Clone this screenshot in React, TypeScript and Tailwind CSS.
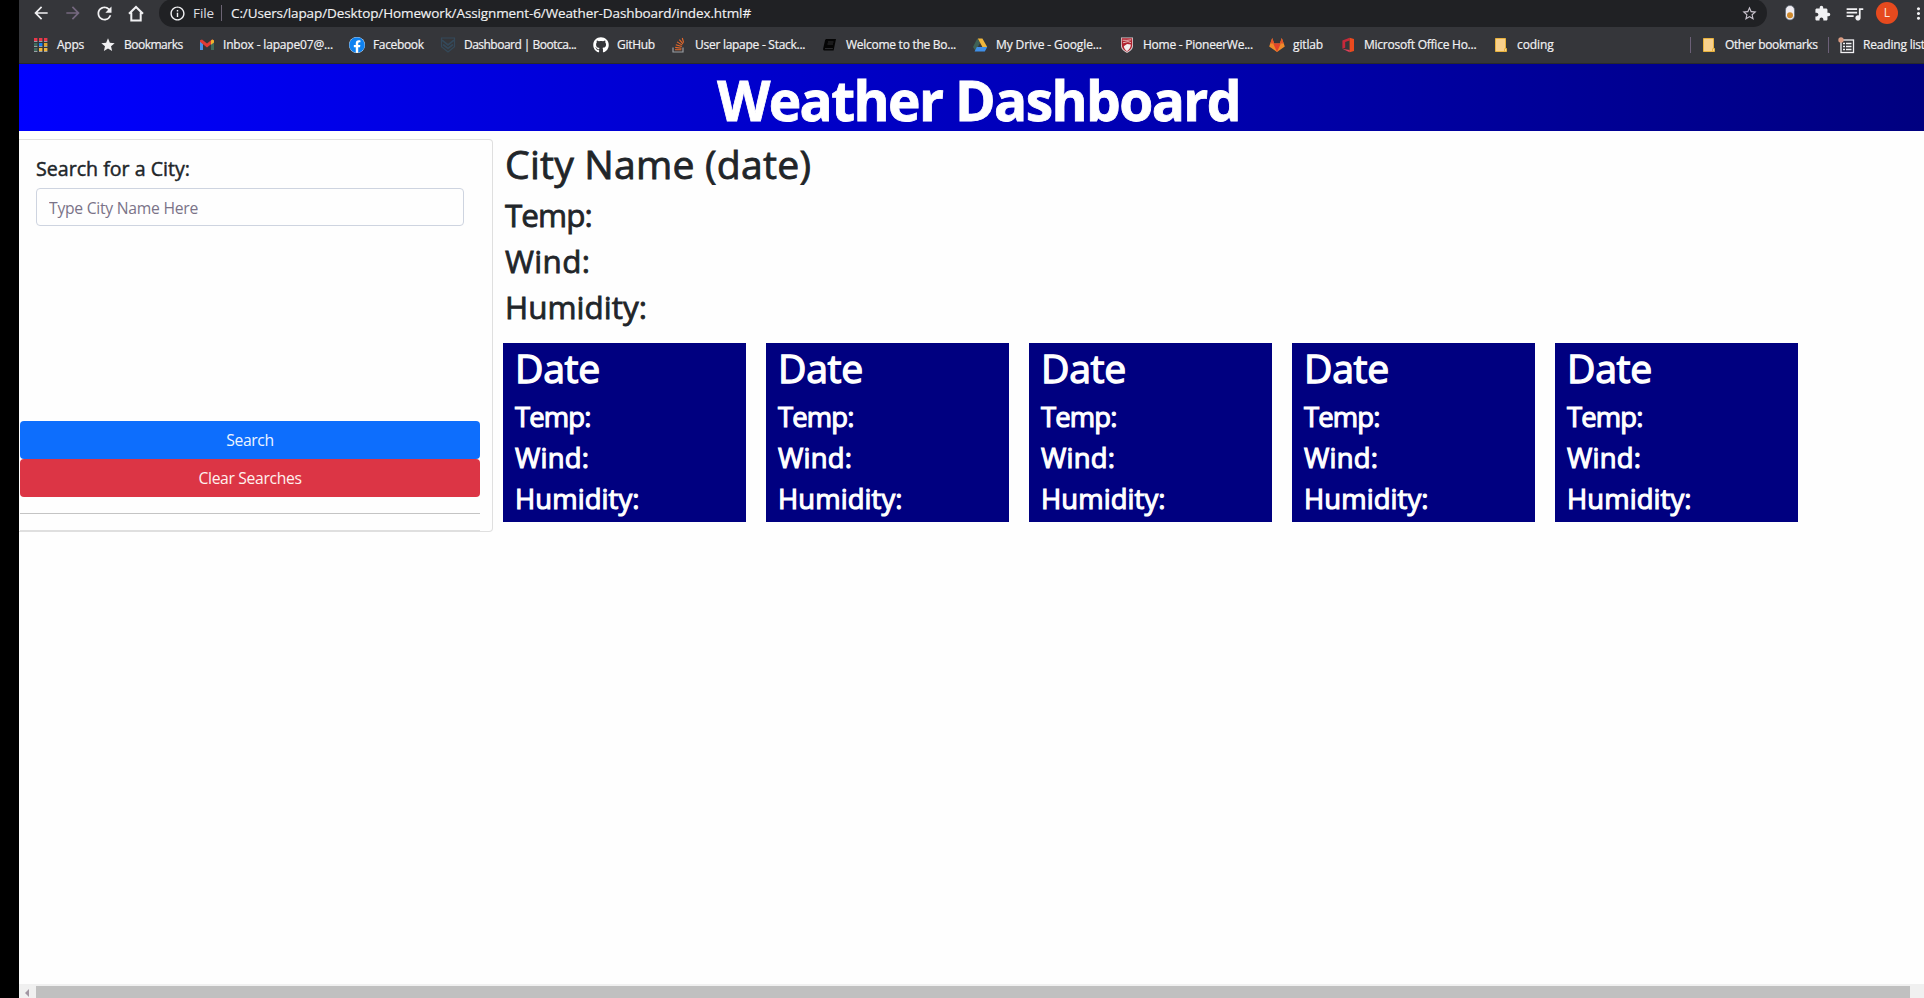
import React from "react";
import {
  MdArrowBack,
  MdArrowForward,
  MdExtension,
  MdInfoOutline,
  MdMoreVert,
  MdQueueMusic,
  MdRefresh,
  MdStar,
  MdStarBorder,
} from "react-icons/md";
import { FaFacebook, FaGithub } from "react-icons/fa";

function HomeIcon() {
  return (
    <svg width="16" height="17" viewBox="0 0 16 17" fill="none" stroke="#f1f1f3" strokeWidth="2">
      <path d="M1 8.8 8 2l7 6.800M3.300 7.500V15.500h9.400V7.500" />
    </svg>
  );
}

function AppsIcon() {
  const dots = [
    ["#e8384a", "#e8384a", "#e8384a"],
    ["#3f6b5c", "#1a7ff0", "#e0a32c"],
    ["#3f6b5c", "#f0b63a", "#f0b63a"],
  ];
  return (
    <svg width="16" height="16" viewBox="0 0 16 16">
      {dots.map((row, y) =>
        row.map((c, x) => (
          <g key={`${x}-${y}`}>
            <rect x={1 + x * 5} y={1 + y * 5} width="3.4" height="3" fill={c} />
            <rect x={1 + x * 5} y={4 + y * 5} width="3.4" height="1" fill="#9aa0a6" />
          </g>
        )),
      )}
    </svg>
  );
}

function GmailIcon() {
  return (
    <svg width="16" height="16" viewBox="0 0 16 16">
      <path d="M1 4v9h3V7z" fill="#4a90e8" />
      <path d="M15 4v9h-3V7z" fill="#3f6b5c" />
      <path d="M1 3.2 3 2.6l5 4 5-4 2 .6v1.6l-7 5.6-7-5.6z" fill="#e23b36" />
      <path d="M12 3.4 13.4 2.4 15 3.4V5.4l-3 2.4z" fill="#efb32c" />
    </svg>
  );
}

function BootcampIcon() {
  return (
    <svg width="16" height="16" viewBox="0 0 16 16" fill="none" stroke="#34495a" strokeWidth="1.7">
      <path d="M1.5 1h13v8.6L8 15 1.5 9.6z" strokeWidth="1.2" />
      <path d="M2 3.2 8 8l6-4.8M3 7.5l5 4 5-4" />
    </svg>
  );
}

function StackIcon() {
  return (
    <svg width="16" height="16" viewBox="0 0 16 16" fill="none">
      <path d="M2 10.5V15h10v-4.5" stroke="#9a9da1" strokeWidth="1.2" />
      <path
        d="M4 12.8h6.4M4.2 10.4l6.3.9M4.8 7.7l6 1.9M6 4.9l5.3 3.2M8.4 2.6l3.6 4.3M11.3 1l1.3 4.6"
        stroke="#e8692a"
        strokeWidth="1.1"
      />
    </svg>
  );
}

function BookIcon() {
  return (
    <svg width="16" height="16" viewBox="0 0 16 16">
      <path d="M5 2h9l-2.4 11.6H2.2c-1-.2-1.2-1.2-1-2L3 3.5C3.3 2.4 4 2 5 2z" fill="#050505" />
      <path d="M6 5h5.5M5.5 7h5.5M3 11.6h7.8" stroke="#3a3a3d" strokeWidth="0.8" />
    </svg>
  );
}

function DriveIcon() {
  return (
    <svg width="16" height="16" viewBox="0 0 16 16">
      <path d="M5.3 1.6 8 6 3.6 14 1 10z" fill="#3f6156" />
      <path d="M5.8 1.6h4.6L15.2 10h-4.8z" fill="#f0b63a" />
      <path d="M4.8 10h10.4l-2.4 4.4H2.6z" fill="#3f8fe8" />
    </svg>
  );
}

function PioneerIcon() {
  return (
    <svg width="16" height="16" viewBox="0 0 16 16">
      <path d="M2 .5h12v8c0 3.600-2.600 5.800-6 7.400C4.600 14.300 2 12.100 2 8.500z" fill="#d9cfd2" />
      <path d="M2.800 1.300h10.400v6.500c0 3.400-2 5.400-5.200 7-3.200-1.600-5.200-3.600-5.200-7z" fill="#b0232f" />
      <path d="M4.800 9.200 8 7l3.800.6c0 3-1.400 4.800-3.800 6.600-1.900-1.300-2.900-3-3.200-5z" fill="#f3eeee" />
      <path d="M3.600 3.200c3 .3 5.400.2 8.600-.4M4 5.800l5-1.200 3 1" stroke="#e9c9cb" strokeWidth="0.9" fill="none" />
    </svg>
  );
}

function GitlabIcon() {
  return (
    <svg width="16" height="16" viewBox="0 0 16 16">
      <path d="M8 15 .2 9.4 3.2 1l2 5.400h5.600l2-5.400 3 8.400z" fill="#f08a2a" />
      <path d="M8 15 4.200 6.400h7.600z" fill="#e2432a" />
      <path d="M3.200 1l2 5.400H1.400zM12.800 1l-2 5.400h3.800z" fill="#e2532a" />
    </svg>
  );
}

function OfficeIcon() {
  return (
    <svg width="16" height="16" viewBox="0 0 16 16">
      <path d="M9.600.8 2.400 3.600v8.200l2.800-1V5l4.400-1.400z" fill="#c8283a" />
      <path d="M9.600.8 14 2v12l-4.400 1.300z" fill="#ea4a1e" />
      <path d="M2.400 11.800 5.200 12.200l4.400.8v2.300z" fill="#e0405a" />
    </svg>
  );
}

function FolderIcon() {
  return (
    <svg width="16" height="16" viewBox="0 0 16 16">
      <path d="M2.500 1.500h10v10h1v3h-11z" fill="#f8d08c" stroke="#e9b23c" />
      <path d="M11.500 14v-2.500" stroke="#e9b23c" />
    </svg>
  );
}

function ReadingIcon() {
  return (
    <svg width="17" height="17" viewBox="0 0 17 17" fill="none">
      <rect x="3" y="3" width="12.500" height="12.500" stroke="#f1f1f3" strokeWidth="1.300" />
      <path d="M5 6.500h2M8 6.500h5.500M5 9.500h2M8 9.500h5.500M5 12.500h2M8 12.500h5.500" stroke="#f1f1f3" strokeWidth="1.400" />
      <circle cx="3" cy="3" r="2.700" fill="#d99a80" />
    </svg>
  );
}

function SwitchIcon() {
  return (
    <svg width="10" height="16" viewBox="0 0 10 16" className="shrink-0">
      <rect x="0.500" y="0.500" width="9" height="14.500" rx="4.500" fill="#f1eef3" stroke="#5a6673" strokeWidth="0.700" />
      <circle cx="5" cy="10.300" r="3" fill="#cf8a2c" />
    </svg>
  );
}

type Bookmark = { label: string; box: string; text: string; icon: React.ReactNode };

const bookmarks: Bookmark[] = [
  { label: "Apps", box: "w-[67px]", text: "tracking-[-0.25px]", icon: <AppsIcon /> },
  { label: "Bookmarks", box: "w-[99px]", text: "tracking-[-0.5px]", icon: <MdStar size={16} color="#f1f1f3" /> },
  { label: "Inbox - lapape07@...", box: "w-[150px]", text: "tracking-[-0.17px]", icon: <GmailIcon /> },
  {
    label: "Facebook",
    box: "w-[91px]",
    text: "tracking-[-0.35px]",
    icon: (
      <span className="flex size-4 items-center justify-center rounded-full bg-white">
        <FaFacebook size={16} color="#0f82f0" />
      </span>
    ),
  },
  { label: "Dashboard | Bootca...", box: "w-[153px]", text: "tracking-[-0.52px]", icon: <BootcampIcon /> },
  { label: "GitHub", box: "w-[78px]", text: "tracking-[-0.3px]", icon: <FaGithub size={16} color="#ffffff" /> },
  { label: "User lapape - Stack...", box: "w-[151px]", text: "tracking-[-0.27px]", icon: <StackIcon /> },
  { label: "Welcome to the Bo...", box: "w-[150px]", text: "tracking-[-0.27px]", icon: <BookIcon /> },
  { label: "My Drive - Google...", box: "w-[147px]", text: "tracking-[-0.12px]", icon: <DriveIcon /> },
  { label: "Home - PioneerWe...", box: "w-[150px]", text: "tracking-[-0.24px]", icon: <PioneerIcon /> },
  { label: "gitlab", box: "w-[71px]", text: "tracking-[-0.14px]", icon: <GitlabIcon /> },
  { label: "Microsoft Office Ho...", box: "w-[153px]", text: "tracking-[-0.24px]", icon: <OfficeIcon /> },
  { label: "coding", box: "w-[80px]", text: "tracking-[-0.1px]", icon: <FolderIcon /> },
];

function AddressBar() {
  return (
    <div className="flex h-[27px] shrink-0 items-start text-[#f1f1f3]">
      <div className="flex h-[26px] w-[140px] shrink-0 items-center pl-3">
        <MdArrowBack size={20} className="shrink-0" />
        <MdArrowForward size={20} className="ml-3 shrink-0 text-[#75687f]" />
        <MdRefresh size={21} className="ml-[11px] shrink-0" />
        <span className="ml-[13px] shrink-0">
          <HomeIcon />
        </span>
      </div>
      <div className="-mt-px flex h-7 w-[1608px] shrink-0 items-center rounded-full bg-[#202124] pl-[10px] text-[13.5px]">
        <MdInfoOutline size={17} className="shrink-0" />
        <span className="ml-[7px] w-7 tracking-[-0.09px] text-[#dcdce0]">File</span>
        <span className="h-4 w-px bg-[#6c6474]" />
        <span className="ml-[9px] w-[1510px] whitespace-nowrap tracking-[-0.11px] [-webkit-text-stroke:0.15px_currentColor]">
          C:/Users/lapap/Desktop/Homework/Assignment-6/Weather-Dashboard/index.html#
        </span>
        <MdStarBorder size={17} className="shrink-0 text-[#c9c3cd]" />
      </div>
      <div className="flex h-[26px] flex-1 items-center overflow-hidden pl-[18px]">
        <SwitchIcon />
        <MdExtension size={17} className="ml-[19px] shrink-0" />
        <MdQueueMusic size={21} className="ml-[13px] shrink-0" />
        <span className="ml-[11px] flex size-[22px] shrink-0 items-center justify-center rounded-full bg-[#e64a1e] text-xs text-[#fbe7df]">
          L
        </span>
        <MdMoreVert size={19} className="ml-[11px] shrink-0" />
      </div>
    </div>
  );
}

function BookmarkBar() {
  return (
    <div className="flex h-[37px] shrink-0 items-start overflow-hidden border-b border-[#28292c] pl-[14px] text-[12px] leading-[36px] whitespace-nowrap text-[#f1f1f3] [-webkit-text-stroke:0.2px_currentColor]">
      {bookmarks.map((b) => (
        <div key={b.label} className={`flex h-9 shrink-0 items-center gap-2 ${b.box}`}>
          <span className="flex w-4 shrink-0 justify-center">{b.icon}</span>
          <span className={b.text}>{b.label}</span>
        </div>
      ))}
      <div className="ml-[117px] flex h-9 shrink-0 items-center">
        <span className="h-4 w-px bg-[#6c6078]" />
        <span className="ml-[10px]">
          <FolderIcon />
        </span>
        <span className="ml-2 w-[93px] tracking-[-0.4px]">Other bookmarks</span>
        <span className="ml-[10px] h-4 w-px bg-[#6c6078]" />
        <span className="ml-[9px]">
          <ReadingIcon />
        </span>
        <span className="ml-2 tracking-[-0.19px]">Reading list</span>
      </div>
    </div>
  );
}

function SearchCard() {
  return (
    <section className="mt-2 flex h-[393px] w-[474px] shrink-0 flex-col rounded-r border border-l-0 border-[#dfdfdf] pl-px">
      <label
        htmlFor="city"
        className="mt-4 ml-4 h-8 text-[19.6px] leading-[26px] tracking-[0.01px] [-webkit-text-stroke:0.45px_currentColor]"
      >
        Search for a City:
      </label>
      <input
        id="city"
        placeholder="Type City Name Here"
        className="ml-4 h-[38px] w-[428px] rounded border border-[#ced4e0] bg-transparent px-3 pt-px text-[15.7px] tracking-[-0.257px] placeholder:text-[#7a7388]"
      />
      <button className="mt-[195px] h-[38px] w-[460px] rounded bg-[#0d6efd] pt-px text-[15.7px] tracking-[-0.4px] text-[#eef4ff]">
        Search
      </button>
      <button className="h-[38px] w-[460px] rounded bg-[#dc3545] pt-px text-[15.7px] tracking-[-0.34px] text-[#fff1ee]">
        Clear Searches
      </button>
      <hr className="mt-4 w-[460px] border-[#c4c4c4]" />
      <hr className="mt-4 w-[460px] border-[#dfdfdf]" />
    </section>
  );
}

function DayCard() {
  return (
    <article className="h-[179px] w-[243px] bg-[#000080] pl-3 text-white">
      <h3 className="mb-[3px] text-[39.2px] leading-[50px] tracking-[-0.3px] [-webkit-text-stroke:1.3px_currentColor]">
        Date
      </h3>
      <div className="text-[27.4px] leading-[41px] tracking-[0.1px] [-webkit-text-stroke:1.1px_currentColor]">
        <p className="tracking-[-0.85px]">Temp:</p>
        <p className="tracking-[0.25px]">Wind:</p>
        <p>Humidity:</p>
      </div>
    </article>
  );
}

export default function App() {
  return (
    <div className="flex h-[998px] w-[1924px] overflow-hidden bg-black pl-[19px] font-['Open_Sans','Noto_Sans',sans-serif]">
      <div className="flex min-w-0 flex-1 flex-col bg-[#35363a]">
        <AddressBar />
        <BookmarkBar />
        <h1 className="h-[67px] shrink-0 bg-linear-to-r from-[#0000ff] to-[#000080] pt-0.5 pl-[14px] text-center text-[55px] leading-[67px] font-bold tracking-[-1.6px] text-white [-webkit-text-stroke:0.8px_currentColor]">
          Weather Dashboard
        </h1>
        <div className="flex min-h-0 flex-1 bg-[#fefefe] text-[#212529]">
          <SearchCard />
          <main className="pt-[9px] pl-[10px]">
            <div className="pl-[2px] [-webkit-text-stroke:0.8px_currentColor]">
              <h2 className="mb-1 text-[39.2px] leading-[48px] tracking-[0.2px]">City Name (date)</h2>
              <div className="text-[31.4px] leading-[46px] tracking-[0.05px]">
                <p className="tracking-[-0.95px]">Temp:</p>
                <p className="tracking-[0.35px]">Wind:</p>
                <p>Humidity:</p>
              </div>
            </div>
            <div className="mt-[13px] flex gap-5">
              {[0, 1, 2, 3, 4].map((day) => (
                <DayCard key={day} />
              ))}
            </div>
          </main>
        </div>
        <div className="flex h-[14px] shrink-0 bg-[#f0f0f0]">
          <div className="flex w-[17px] items-center justify-center pt-[3px] pr-0.5">
            <svg width="4" height="8" viewBox="0 0 4 8">
              <path d="M4 0v8L0 4z" fill="#a397a3" />
            </svg>
          </div>
          <div className="mt-0.5 w-[1874px] bg-[#c0c0c0]" />
        </div>
      </div>
    </div>
  );
}
